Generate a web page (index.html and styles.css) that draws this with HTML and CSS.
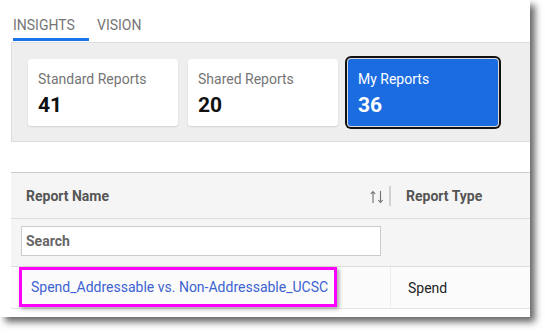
FILE: index.html
```html
<!DOCTYPE html>
<html>
<head>
<meta charset="utf-8">
<link rel="stylesheet" href="styles.css">
</head>
<body>
<div class="frame">
  <div class="tabs">
    <div class="tab active">INSIGHTS</div>
    <div class="tab">VISION</div>
  </div>
  <div class="panel">
    <div class="card">
      <div class="card-label">Standard Reports</div>
      <div class="card-num">41</div>
    </div>
    <div class="card">
      <div class="card-label">Shared Reports</div>
      <div class="card-num">20</div>
    </div>
    <div class="card selected">
      <div class="card-label">My Reports</div>
      <div class="card-num">36</div>
    </div>
  </div>
  <div class="table">
    <div class="row head">
      <div class="cell c1">
        <span class="th">Report Name</span>
        <svg class="sort" width="14" height="14" viewBox="0 0 14 14" fill="none" stroke="#707070" stroke-width="1.1">
          <path d="M3 13V1.5M0.8 4L3 1.5L5.2 4"/>
          <path d="M10.5 1V12.5M8.3 10L10.5 12.5L12.7 10"/>
        </svg>
      </div>
      <div class="sep"></div>
      <div class="cell c2"><span class="th">Report Type</span></div>
    </div>
    <div class="row filter">
      <div class="cell c1f"><div class="search">Search</div></div>
      <div class="cell c2f"></div>
    </div>
    <div class="row data">
      <div class="cell c1d"><span class="hl"><a class="link">Spend_Addressable vs. Non-Addressable_UCSC</a></span></div>
      <div class="cell c2d">Spend</div>
    </div>
  </div>
</div>
</body>
</html>
```
FILE: styles.css
```css
* { box-sizing: border-box; }
html, body { margin: 0; padding: 0; background: #ffffff; }
body { font-family: Roboto, "Noto Sans", Arial, sans-serif; width: 545px; height: 334px; overflow: hidden; }
.frame {
  width: 530px;
  height: 317px;
  background: #ffffff;
  box-shadow: 5px 5px 7px rgba(0,0,0,0.6);
  overflow: hidden;
}
.tabs {
  height: 42px;
  display: flex;
  padding-left: 13px;
  gap: 8px;
}
.tab {
  height: 41px;
  padding-top: 17px;
  font-size: 14px;
  line-height: 16px;
  color: #757575;
  border-bottom: 3px solid transparent;
}
.tab.active {
  width: 76px;
  border-bottom-color: #1a73e8;
}
.panel {
  margin-left: 11px;
  background: #eeeeee;
  border-top: 1px solid #dddddd;
  border-left: 1px solid #dddddd;
  border-bottom: 1px solid #dddddd;
  padding: 16px 0 15px 16px;
  display: flex;
  gap: 10px;
}
.card {
  width: 150px;
  height: 67px;
  background: #ffffff;
  border-radius: 3px;
  box-shadow: 0 1px 2px rgba(0,0,0,0.12);
  padding: 11px 0 0 10px;
}
.card-label {
  font-size: 14px;
  line-height: 18px;
  color: #757575;
}
.card-num {
  margin-top: 5px;
  font-size: 21px;
  line-height: 24px;
  font-weight: 700;
  color: #111111;
}
.card.selected {
  background: #1b6ce0;
  border-radius: 3px;
  box-shadow: 0 0 0 1px #dcdcdc, 0 0 0 3px #111111;
}
.card.selected .card-label, .card.selected .card-num { color: #ffffff; }
.table {
  margin-top: 30px;
  margin-left: 11px;
  border-top: 1px solid #cccccc;
}
.row { display: flex; }
.head {
  height: 46px;
  background: #f5f5f5;
  border-bottom: 1px solid #dddddd;
  align-items: center;
}
.th {
  font-size: 14px;
  font-weight: 700;
  color: #555555;
}
.c1 {
  width: 378px;
  padding-left: 15px;
  padding-right: 5px;
  display: flex;
  justify-content: space-between;
  align-items: center;
}
.sort {
  display: block;
  margin-top: 2px;
}
.sep {
  width: 2px;
  height: 20px;
  background: #d0d0d0;
}
.c2 { padding-left: 15px; }
.filter {
  height: 48px;
  background: #f5f5f5;
  border-bottom: 1px solid #dddddd;
}
.c1f {
  width: 380px;
  padding: 7px 0 0 10px;
}
.search {
  width: 360px;
  height: 30px;
  border: 1px solid #cccccc;
  background: #ffffff;
  padding-left: 4px;
  font-size: 14px;
  font-weight: 700;
  line-height: 28px;
  color: #666666;
}
.data {
  height: 42px;
  background: #fbfbfb;
  border-bottom: 1px solid #e6e6e6;
}
.c1d {
  width: 380px;
  padding-left: 8px;
  border-right: 1px solid #eeeeee;
}
.hl {
  display: inline-block;
  border: 3px solid #ff00ff;
  height: 40px;
  padding: 0 6px 0 9px;
  line-height: 34px;
  box-shadow: 2px 2px 4px rgba(0,0,0,0.35);
}
.link {
  font-size: 14px;
  color: #3d63d1;
}
.c2d {
  padding-left: 17px;
  font-size: 14px;
  line-height: 42px;
  color: #222222;
}
```
